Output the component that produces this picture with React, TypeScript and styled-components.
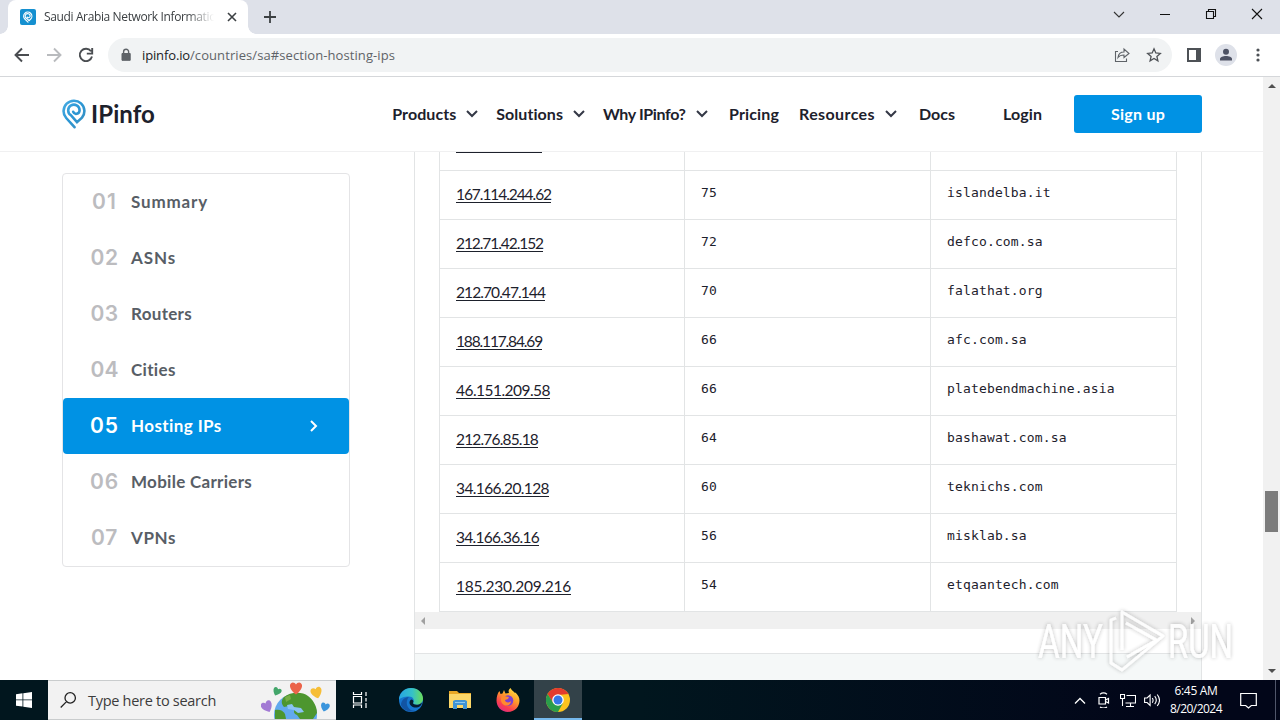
import React, { useLayoutEffect, useRef, useState } from 'react';
import styled, { createGlobalStyle } from 'styled-components';

const GlobalStyle = createGlobalStyle`
	* {
		box-sizing: border-box;
	}

	body {
		margin: 0;
		overflow: hidden;
		background: #fff;
	}
`;

const ui = `'Open Sans', 'Noto Sans', sans-serif`;
const brand = `Lato, 'Open Sans', sans-serif`;
const blue = '#0092e4';

const Desktop = styled.div`
	position: relative;
	display: flex;
	flex-direction: column;
	width: 1280px;
	height: 720px;
	overflow: hidden;
	font-family: ${brand};
	color: #1d212c;
`;

const Tracked = styled.span`
	display: inline-block;
	white-space: nowrap;
`;

interface FitProps {
	width: number;
	children: string;
}

// Spreads the letters evenly so that the label takes the given width
const Fit: React.FC<FitProps> = (props: FitProps) => {
	const ref = useRef<HTMLSpanElement>(null);
	const [spacing, setSpacing] = useState(0);

	useLayoutEffect(() => {
		if (ref.current) {
			const natural = ref.current.getBoundingClientRect().width;
			setSpacing((props.width - natural) / props.children.length);
		}
	}, []);

	return (
		<Tracked ref={ref} style={{ letterSpacing: spacing }}>
			{props.children}
		</Tracked>
	);
};

/* Browser chrome */

const TabStrip = styled.div`
	display: flex;
	justify-content: space-between;
	height: 34px;
	padding-left: 8px;
	background: #dee1e9;
`;

const TabGroup = styled.div`
	display: flex;
	align-items: center;
`;

const Tab = styled.div`
	position: relative;
	display: flex;
	align-items: center;
	width: 240px;
	height: 34px;
	padding: 0 8px 0 12px;
	border-radius: 8px 8px 0 0;
	background: #fff;

	&::before,
	&::after {
		content: '';
		position: absolute;
		bottom: 0;
		width: 8px;
		height: 8px;
	}

	&::before {
		left: -8px;
		background: radial-gradient(circle at 0 0, transparent 7.5px, #fff 8px);
	}

	&::after {
		right: -8px;
		background: radial-gradient(circle at 100% 0, transparent 7.5px, #fff 8px);
	}
`;

const Favicon = styled.div`
	display: flex;
	align-items: center;
	justify-content: center;
	width: 16px;
	height: 16px;
	border-radius: 2px;
	background: #1590d0;
`;

const TabTitle = styled.div`
	flex: 1;
	margin: 0 10px 1px 8px;
	overflow: hidden;
	font: 12px ${ui};
	white-space: nowrap;
	color: #3c4043;
	mask-image: linear-gradient(to right, #000 84%, transparent);
`;

const NewTab = styled.div`
	display: flex;
	margin-left: 15px;
`;

const WindowButtons = styled.div`
	display: flex;
	height: 28px;
`;

const WindowButton = styled.div`
	display: flex;
	align-items: center;
	justify-content: center;
	width: 46px;
`;

const Toolbar = styled.div`
	display: flex;
	align-items: center;
	height: 43px;
	padding: 0 6px;
	border-bottom: 1px solid #d5d7da;
	background: #fff;
`;

const ToolButton = styled.div`
	display: flex;
	align-items: center;
	justify-content: center;
	width: 32px;
	height: 32px;
`;

const Omnibox = styled.div`
	display: flex;
	align-items: center;
	flex: 1;
	height: 34px;
	margin: 0 6px;
	padding: 0 2px 0 12px;
	border-radius: 17px;
	background: #f1f3f4;
`;

const Url = styled.div`
	flex: 1;
	margin-left: 10px;
	font: 13px ${ui};
	color: #5f6368;

	b {
		font-weight: 400;
		color: #202124;
	}
`;

const Avatar = styled.div`
	display: flex;
	align-items: center;
	justify-content: center;
	width: 22px;
	height: 22px;
	border-radius: 50%;
	background: #dee1e9;
`;

/* Web page */

const Viewport = styled.div`
	display: flex;
	height: 603px;
`;

const Page = styled.div`
	display: flex;
	flex-direction: column;
	width: 1263px;
`;

const SiteHeader = styled.div`
	display: flex;
	align-items: center;
	justify-content: space-between;
	height: 75px;
	padding: 0 61px 0 62px;
	border-bottom: 1px solid #f0f0f1;
`;

const Logo = styled.div`
	display: flex;
	align-items: center;
	gap: 4px;
	padding-bottom: 1px;
	font-size: 24px;
	font-weight: 700;
	line-height: 28px;
`;

const Nav = styled.div`
	display: flex;
	align-items: center;
	font-size: 16px;
	font-weight: 700;
`;

const NavItem = styled.div<{ $gap: number }>`
	display: flex;
	align-items: center;
	gap: 9px;
	margin-right: ${(p) => p.$gap}px;
	padding-bottom: 2px;
`;

const SignUp = styled.div`
	display: flex;
	align-items: center;
	justify-content: center;
	width: 128px;
	height: 38px;
	padding-bottom: 2px;
	border-radius: 3px;
	background: ${blue};
	color: #fff;
`;

const Main = styled.div`
	display: flex;
	align-items: flex-start;
	justify-content: space-between;
	height: 528px;
	padding: 0 61px 0 62px;
`;

const Sections = styled.div`
	width: 288px;
	margin-top: 21px;
	border: 1px solid #e4e4e6;
	border-radius: 4px;
`;

const Section = styled.div<{ $active: boolean }>`
	display: flex;
	align-items: center;
	height: 56px;
	padding: 0 29px 2px 27px;
	border-radius: 4px;
	background: ${(p) => (p.$active ? blue : 'transparent')};
	color: ${(p) => (p.$active ? '#fff' : '#585e66')};
	font-size: 17px;
	font-weight: 700;

	svg {
		margin-top: 2px;
	}
`;

const SectionNumber = styled.div<{ $active: boolean }>`
	width: 29px;
	margin-right: 12px;
	text-align: center;
	font-family: Inter, sans-serif;
	font-size: 21px;
	font-weight: 600;
	color: ${(p) => (p.$active ? '#fff' : '#bcbcbf')};
`;

const SectionLabel = styled.div`
	flex: 1;
`;

const Card = styled.div`
	display: flex;
	flex-direction: column;
	width: 788px;
	height: 528px;
	border: solid #e2e4e5;
	border-width: 0 1px;
`;

const Table = styled.div`
	width: 738px;
	margin-left: 24px;
	border: solid #e2e4e5;
	border-width: 0 1px;
`;

const Row = styled.div<{ $height: number }>`
	display: grid;
	grid-template-columns: 244px 246px 246px;
	height: ${(p) => p.$height}px;
	border-bottom: 1px solid #e2e4e5;
`;

const Cell = styled.div`
	padding: 13px 16px 0;
	border-left: 1px solid #e2e4e5;
	font: 13px/18px 'DejaVu Sans Mono', monospace;
	letter-spacing: 0.155px;

	&:first-child {
		border-left: 0;
	}
`;

const IpCell = styled.div`
	padding: 11px 16px 0;
	font-size: 15.5px;
	font-weight: 400;
	line-height: 24px;

	span {
		height: 21px;
		border-bottom: 1px solid #1d212c;
		line-height: 24px;
	}
`;

const CutLink = styled.div`
	width: 86px;
	height: 1px;
	margin-left: 16px;
	background: #1d212c;
`;

const SideScroll = styled.div`
	display: flex;
	align-items: center;
	justify-content: space-between;
	height: 17px;
	padding: 0 6px;
	background: #f0f0f0;
`;

const NextPanel = styled.div`
	flex: 1;
	margin-top: 24px;
	border-top: 1px solid #e2e4e5;
	background: #f5f8f8;
`;

const Scrollbar = styled.div`
	display: flex;
	flex-direction: column;
	align-items: center;
	width: 17px;
	padding: 7px 0;
	background: #f1f1f1;
`;

const Thumb = styled.div`
	width: 13px;
	height: 41px;
	margin: 403px 0 auto;
	background: #7c7c7c;
`;

const Arrow = styled.div<{ $dir: 'up' | 'down' | 'left' | 'right' }>`
	border: 4px solid transparent;
	${(p) => p.$dir === 'up' && 'border-top: 0; border-bottom-color: #505050;'}
	${(p) => p.$dir === 'down' && 'border-bottom: 0; border-top-color: #505050;'}
	${(p) => p.$dir === 'left' && 'border-left: 0; border-right-color: #a0a0a0;'}
	${(p) => p.$dir === 'right' && 'border-right: 0; border-left-color: #a0a0a0;'}
`;

/* Taskbar */

const Taskbar = styled.div`
	display: flex;
	height: 40px;
	background: linear-gradient(to right, #01161e, #01161e 50%, #020619 90%);
	color: #fff;
	font-family: ${ui};
`;

const TaskButton = styled.div<{ $width: number; $active?: boolean }>`
	display: flex;
	align-items: center;
	justify-content: center;
	width: ${(p) => p.$width}px;
	background: ${(p) => (p.$active ? '#334249' : 'transparent')};
	box-shadow: ${(p) => (p.$active ? 'inset 0 -2px #76b9ed' : 'none')};
`;

const SearchBox = styled.div`
	display: flex;
	align-items: center;
	justify-content: space-between;
	width: 288px;
	padding: 0 3px 0 12px;
	border: solid #c9cccd;
	border-width: 1px 0;
	background: #f2f2f2;
	color: #3c3c3c;
	font-size: 14.5px;
`;

const SearchHint = styled.div`
	display: flex;
	align-items: center;
	gap: 11px;
`;

const Tray = styled.div`
	display: flex;
	align-items: center;
	margin-left: auto;
`;

const TrayIcon = styled.div`
	display: flex;
	align-items: center;
	justify-content: center;
	width: 24px;
`;

const Clock = styled.div`
	display: flex;
	flex-direction: column;
	align-items: center;
	width: 64px;
	font-size: 12px;
	line-height: 18px;
`;

const ShowDesktop = styled.div`
	width: 5px;
	height: 40px;
	margin-left: 6px;
	border-left: 1px solid #50566a;
`;

const Watermark = styled.svg`
	position: absolute;
	left: 1030px;
	top: 600px;
	overflow: visible;
`;

const Stroke: React.FC<{ d: string; size?: number; color?: string; width?: number }> = ({
	d,
	size = 16,
	color = '#5f6368',
	width = 2,
}) => (
	<svg width={size} height={size} viewBox={`0 0 ${size} ${size}`} fill="none" stroke={color} strokeWidth={width}>
		<path d={d} />
	</svg>
);

const Pin: React.FC<{ size: number; color: string }> = ({ size, color }) => (
	<svg width={size * 0.8} height={size} viewBox="0 0 24 30" fill="none" stroke={color} strokeWidth="2.9" strokeLinecap="round">
		<path d="M12.5 28 4.7 20.3A10.3 10.3 0 1 1 19.3 20.1L15.1 24.2 9.2 18.4A6.1 6.1 0 1 1 17.4 14.6C15.9 17.4 11.8 17.5 10.6 15" />
	</svg>
);

const Heart: React.FC<{ x: number; y: number; color: string; turn: number; size?: number }> = (p) => (
	<path
		transform={`translate(${p.x} ${p.y}) rotate(${p.turn}) scale(${p.size ?? 1})`}
		d="M0 5C-3 3-5-.2-4.6-2.3-4-5-1-4.8 0-2.7 1-4.8 4-5 4.6-2.3 5-.2 3 3 0 5z"
		fill={p.color}
	/>
);

const Earth = () => (
	<svg width="72" height="38" viewBox="0 0 72 38">
		<circle cx="34.5" cy="34" r="21.5" fill="#62a9ee" />
		<path d="M23 16c6-5 18-6 24-1 4 3 9 9 9 17l-4 6H39l-3-4c-3-1-4-4-2-6l-6-3-5 1c-3-3-3-7 0-10z" fill="#4d962f" />
		<path d="M14 29c4-1 8 0 10 4l1 5H14z" fill="#4d962f" />
		<path d="M26 24l5-1 2 3 7 1 3 4-6 1-4-3-6-1z" fill="#8ac3f3" />
		<path d="M24 16l5-2 1 4-5 3z" fill="#76ad45" />
		<Heart x={35} y={7} color="#eb6349" turn={0} size={1.3} />
		<Heart x={16} y={10.5} color="#43a66a" turn={25} size={0.9} />
		<Heart x={55.5} y={11.5} color="#f6be36" turn={-15} size={1.2} />
		<Heart x={6} y={25.5} color="#a27ad4" turn={-25} size={1.2} />
		<Heart x={64} y={26} color="#3b95dc" turn={15} size={0.95} />
	</svg>
);

const Edge = () => (
	<svg width="24" height="24" viewBox="0 0 24 24">
		<defs>
			<linearGradient id="edgeTop" x1="0" x2="1">
				<stop offset="0" stopColor="#27a6e2" />
				<stop offset=".55" stopColor="#35c1c9" />
				<stop offset="1" stopColor="#6bdd58" />
			</linearGradient>
		</defs>
		<circle cx="12" cy="12" r="12" fill="#1676cf" />
		<path d="M0 12C0 4.500 6 0 12 0c7 0 12 5 12 10.500 0 4-3 6.300-6.500 6.300-2.600 0-4-1-3.300-2.200 1.800-3-.7-6-4.200-6C5 8.600 1 10 0 12z" fill="url(#edgeTop)" />
		<path d="M8 13c-1.500 6 4 11 9 9.500C12 25 4 23 2 17c0-4 3-8 8-8-1.300 1-1.700 2.500-2 4z" fill="#1254a3" />
		<path d="M14.200 14.600c-.7 1.200.700 2.200 3.300 2.200 2 0 4-.8 5.500-2.300-.5 3-2.500 4.700-5 5-4 .5-7.500-2-7.500-5 0-1.500 1-3 2.200-3 1.500.3 2.200 1.700 1.500 3.100z" fill="#051c30" />
	</svg>
);

const Folder = () => (
	<svg width="22" height="20" viewBox="0 0 22 20">
		<path d="M0 1h8l2 2h12v15H0z" fill="#e9a825" />
		<path d="M0 4h22v14H0z" fill="#fcd768" />
		<path d="M4 19v-8l2-1h10l2 1v8h-4v-4H8v4z" fill="#3f94d6" />
		<path d="M6 12h10v1H6z" fill="#8cc9f2" />
	</svg>
);

const Firefox = () => (
	<svg width="24" height="24" viewBox="0 0 24 24">
		<defs>
			<linearGradient id="fox" x1=".8" y1="0" x2=".2" y2="1">
				<stop offset="0" stopColor="#ffe243" />
				<stop offset=".4" stopColor="#ff9a2a" />
				<stop offset=".75" stopColor="#fb3d50" />
				<stop offset="1" stopColor="#d92a8c" />
			</linearGradient>
		</defs>
		<path d="M3.500 3l1 3 2-.5L8 2l1.500 3.500L13 5c-1-2 0-4 1.500-5 1 2.500 3 3 4.500 5l.5-.5C22 7 23.500 9.500 23.500 12.500 23.500 19 18.500 24 12 24S.5 19 .5 12.500C.5 9 1.500 5 3.500 3z" fill="url(#fox)" />
		<circle cx="12" cy="12.500" r="5.300" fill="#7d3fd0" />
		<path d="M6 8c3-1 4 1 7 1l-1 2-3 1c0 3 5 3 6 1 0 4-4 5.500-7 4-3-1.500-4-6-2-9z" fill="#ff8a2e" />
	</svg>
);

const Chrome = () => (
	<svg width="24" height="24" viewBox="0 0 24 24">
		<circle cx="12" cy="12" r="12" fill="#fcc31e" />
		<path d="M1.600 6A12 12 0 0 1 22.400 6L12 7 7 15z" fill="#e33b2e" />
		<path d="M1.600 6A12 12 0 0 0 12 24l5-9-5 2-4.700-2z" fill="#2a9d4b" />
		<circle cx="12" cy="12" r="5.800" fill="#fff" />
		<circle cx="12" cy="12" r="4.500" fill="#3577e8" />
	</svg>
);

const navItems = [
	{ label: 'Products', width: 64, menu: true, gap: 17 },
	{ label: 'Solutions', width: 67, menu: true, gap: 17 },
	{ label: 'Why IPinfo?', width: 82.5, menu: true, gap: 20.5 },
	{ label: 'Pricing', width: 50, menu: false, gap: 20 },
	{ label: 'Resources', width: 76, menu: true, gap: 21 },
	{ label: 'Docs', width: 36, menu: false, gap: 48 },
	{ label: 'Login', width: 39, menu: false, gap: 32 },
];

const sections = [
	{ label: 'Summary', width: 77, numberWidth: 25 },
	{ label: 'ASNs', width: 45, numberWidth: 28 },
	{ label: 'Routers', width: 61, numberWidth: 28 },
	{ label: 'Cities', width: 45, numberWidth: 28 },
	{ label: 'Hosting IPs', width: 91, numberWidth: 29 },
	{ label: 'Mobile Carriers', width: 121, numberWidth: 29 },
	{ label: 'VPNs', width: 45, numberWidth: 27 },
];

const rows = [
	{ ip: '167.114.244.62', width: 95, domains: 75, name: 'islandelba.it' },
	{ ip: '212.71.42.152', width: 87, domains: 72, name: 'defco.com.sa' },
	{ ip: '212.70.47.144', width: 89, domains: 70, name: 'falathat.org' },
	{ ip: '188.117.84.69', width: 86, domains: 66, name: 'afc.com.sa' },
	{ ip: '46.151.209.58', width: 94, domains: 66, name: 'platebendmachine.asia' },
	{ ip: '212.76.85.18', width: 82, domains: 64, name: 'bashawat.com.sa' },
	{ ip: '34.166.20.128', width: 93, domains: 60, name: 'teknichs.com' },
	{ ip: '34.166.36.16', width: 83, domains: 56, name: 'misklab.sa' },
	{ ip: '185.230.209.216', width: 115, domains: 54, name: 'etqaantech.com' },
];

const BrowserChrome = () => (
	<>
		<TabStrip>
			<TabGroup>
				<Tab>
					<Favicon>
						<Pin size={12} color="#fff" />
					</Favicon>
					<TabTitle>
						<Fit width={179}>Saudi Arabia Network Information</Fit>
					</TabTitle>
					<Stroke d="M4 4l8 8M12 4l-8 8" color="#3c4043" width={1.6} />
				</Tab>
				<NewTab>
					<Stroke d="M7 1v12M1 7h12" size={14} color="#3c4043" width={1.8} />
				</NewTab>
			</TabGroup>
			<WindowButtons>
				<WindowButton>
					<Stroke d="M3 6l5 5 5-5" color="#333" width={1.1} />
				</WindowButton>
				<WindowButton>
					<Stroke d="M3 8.500h10" color="#111" width={1} />
				</WindowButton>
				<WindowButton>
					<Stroke d="M3.500 5.500h7v7h-7zM5.500 5.500v-2h7v7h-2" color="#111" width={1.1} />
				</WindowButton>
				<WindowButton>
					<Stroke d="M3 3l10 10M13 3L3 13" color="#111" width={1.1} />
				</WindowButton>
			</WindowButtons>
		</TabStrip>
		<Toolbar>
			<ToolButton>
				<Stroke d="M15 8H2M8 1.500L1.500 8 8 14.500" color="#4a4d51" width={1.9} />
			</ToolButton>
			<ToolButton>
				<Stroke d="M1 8h13M8 1.500L14.500 8 8 14.500" color="#b9bbbe" width={1.9} />
			</ToolButton>
			<ToolButton>
				<Stroke d="M13 4.200A6.200 6.200 0 1 0 14 9.500M14.200 1v5.600H8.800" color="#4a4d51" width={1.9} />
			</ToolButton>
			<Omnibox>
				<svg width="12" height="14" viewBox="0 0 12 14">
					<path d="M2 5.500h8.200v6.800H2z" fill="#5f6368" stroke="#5f6368" strokeLinejoin="round" />
					<path d="M3.600 6V3.800a2.500 2.500 0 0 1 5 0V6" fill="none" stroke="#5f6368" strokeWidth="1.400" />
				</svg>
				<Url>
					<b>
						<Fit width={48}>ipinfo.io</Fit>
					</b>
					<Fit width={205}>/countries/sa#section-hosting-ips</Fit>
				</Url>
				<ToolButton>
					<Stroke
						d="M4 4.500H1.500v10h11v-3M4 10.500c.5-4 3-5.500 6-5.500V2l5 4.500-5 4V8c-3 0-4.500.5-6 2.500z"
						width={1.1}
					/>
				</ToolButton>
				<ToolButton>
					<Stroke
						d="M8 1.800l1.800 4.200 4.500.4-3.400 3 1 4.400L8 11.500l-3.900 2.300 1-4.400-3.400-3 4.500-.4z"
						color="#4f5257"
						width={1.3}
					/>
				</ToolButton>
			</Omnibox>
			<ToolButton>
				<svg width="14" height="14" viewBox="0 0 14 14">
					<path d="M1 1h12v12H1z" fill="#fff" stroke="#4d5156" strokeWidth="2" />
					<path d="M9 1h4v12H9z" fill="#4d5156" />
				</svg>
			</ToolButton>
			<ToolButton>
				<Avatar>
					<svg width="14" height="14" viewBox="0 0 14 14" fill="#4c5163">
						<circle cx="7" cy="3.800" r="3" />
						<path d="M1 12.500v-1.500c0-2 3-3 6-3s6 1 6 3v1.500z" />
					</svg>
				</Avatar>
			</ToolButton>
			<ToolButton>
				<svg width="4" height="14" viewBox="0 0 4 14" fill="#4d5156">
					<circle cx="2" cy="2" r="1.600" />
					<circle cx="2" cy="7" r="1.600" />
					<circle cx="2" cy="12" r="1.600" />
				</svg>
			</ToolButton>
		</Toolbar>
	</>
);

const Site = () => (
	<Page>
		<SiteHeader>
			<Logo>
				<svg width="25" height="31" viewBox="0 0 25 31">
					<defs>
						<linearGradient id="pin" x1="0" x2="1" y1="0" y2="1">
							<stop offset="0" stopColor="#46abe2" />
							<stop offset=".5" stopColor="#2b96d4" />
							<stop offset="1" stopColor="#3d8fbd" />
						</linearGradient>
					</defs>
					<path
						d="M12.500 29.200L4.200 20A10.400 10.400 0 1 1 20 19.700L15 24.200 8.900 17.200A5.700 5.700 0 1 1 17.600 12.200C17.400 16.200 12.500 17.200 11.200 13.800"
						fill="none"
						stroke="url(#pin)"
						strokeWidth="2.600"
						strokeLinecap="round"
					/>
				</svg>
				<Fit width={64}>IPinfo</Fit>
			</Logo>
			<Nav>
				{navItems.map((item) => (
					<NavItem key={item.label} $gap={item.gap}>
						<Fit width={item.width}>{item.label}</Fit>
						{item.menu && <Stroke d="M2 5l5 5 5-5" size={14} color="#343846" />}
					</NavItem>
				))}
				<SignUp>
					<Fit width={54}>Sign up</Fit>
				</SignUp>
			</Nav>
		</SiteHeader>
		<Main>
			<Sections>
				{sections.map((section, i) => (
					<Section key={section.label} $active={i === 4}>
						<SectionNumber $active={i === 4}>
							<Fit width={section.numberWidth}>{`0${i + 1}`}</Fit>
						</SectionNumber>
						<SectionLabel>
							<Fit width={section.width}>{section.label}</Fit>
						</SectionLabel>
						{i === 4 && <Stroke d="M3 1l5 5-5 5" size={12} color="#fff" />}
					</Section>
				))}
			</Sections>
			<Card>
				<Table>
					<Row $height={19}>
						<CutLink />
						<Cell />
						<Cell />
					</Row>
					{rows.map((row) => (
						<Row key={row.ip} $height={49}>
							<IpCell>
								<Fit width={row.width}>{row.ip}</Fit>
							</IpCell>
							<Cell>{row.domains}</Cell>
							<Cell>{row.name}</Cell>
						</Row>
					))}
				</Table>
				<SideScroll>
					<Arrow $dir="left" />
					<Arrow $dir="right" />
				</SideScroll>
				<NextPanel />
			</Card>
		</Main>
	</Page>
);

const WindowsTaskbar = () => (
	<Taskbar>
		<TaskButton $width={48}>
			<svg width="16" height="16" viewBox="0 0 16 16" fill="#fff">
				<path d="M0 2.200l6.500-.9v6.200H0zM7.300 1.200L16 0v7.500H7.300zM0 8.300h6.500v6.300L0 13.700zM7.300 8.300H16V16l-8.700-1.200z" />
			</svg>
		</TaskButton>
		<SearchBox>
			<SearchHint>
				<Stroke d="M10.200.7a5.200 5.200 0 1 1 0 10.400a5.200 5.200 0 1 1 0-10.400zM6.500 9.600L.7 15.500" size={17} color="#222" width={1.3} />
				<Fit width={128}>Type here to search</Fit>
			</SearchHint>
			<Earth />
		</SearchBox>
		<TaskButton $width={48}>
			<Stroke
				d="M2.500 1v2.500h8V1M2.500 17v-3h8v3M2.500 5.500h8v6.500h-8zM15 1v4M15 12v5M15 7v3.500"
				size={18}
				color="#fff"
				width={1.2}
			/>
		</TaskButton>
		<TaskButton $width={54}>
			<Edge />
		</TaskButton>
		<TaskButton $width={44}>
			<Folder />
		</TaskButton>
		<TaskButton $width={52}>
			<Firefox />
		</TaskButton>
		<TaskButton $width={48} $active>
			<Chrome />
		</TaskButton>
		<Tray>
			<TrayIcon>
				<Stroke d="M2 10.500l5-5 5 5" size={14} color="#fff" width={1.3} />
			</TrayIcon>
			<TrayIcon>
				<Stroke
					d="M3 5.500h6.500v6.500H3zM9.500 8l3-1.500v4.500l-3-1.500M4 2.300c2-1.500 5-1.500 7 0M4 15c2 1.300 5 1.300 7 0"
					color="#fff"
					width={1.2}
				/>
			</TrayIcon>
			<TrayIcon>
				<Stroke d="M6.500 3.500h9v7.500H5.500M.5 2.500h4v4h-4zM2.500 6.500v7.500M10.500 11v3M6 14.500h8" color="#fff" width={1.1} />
			</TrayIcon>
			<TrayIcon>
				<Stroke
					d="M.6 6v4.500h2.500l3 3V3l-3 3zM8.300 6c1 1.500 1 3.200 0 4.700M10.700 4.200c2 2.500 2 5.500 0 8M13.200 2.500c2.800 3.500 2.800 8 0 11.500"
					color="#fff"
					width={1.1}
				/>
			</TrayIcon>
			<Clock>
				<Fit width={43}>6:45 AM</Fit>
				<Fit width={52}>8/20/2024</Fit>
			</Clock>
			<TaskButton $width={41}>
				<Stroke d="M.7 1.500h15.600v12h-5L8.500 16l-2.800-2.500h-5z" size={17} color="#fff" width={1.2} />
			</TaskButton>
			<ShowDesktop />
		</Tray>
	</Taskbar>
);

const App: React.FC = () => {
	return (
		<Desktop>
			<GlobalStyle />
			<BrowserChrome />
			<Viewport>
				<Site />
				<Scrollbar>
					<Arrow $dir="up" />
					<Thumb />
					<Arrow $dir="down" />
				</Scrollbar>
			</Viewport>
			<WindowsTaskbar />
			<Watermark width="220" height="80" viewBox="0 0 220 80">
				<defs>
					<filter id="glow" x="-10%" y="-10%" width="120%" height="120%">
						<feDropShadow dx="0" dy="0" stdDeviation="1.900" floodColor="#000" floodOpacity=".32" />
					</filter>
				</defs>
				<g filter="url(#glow)" fill="#fff" opacity=".85" fontFamily="Roboto, sans-serif" fontSize="48" fontWeight="400">
					<text x="8" y="58" textLength="65" lengthAdjust="spacingAndGlyphs">
						ANY
					</text>
					<text x="138" y="58" textLength="65" lengthAdjust="spacingAndGlyphs">
						RUN
					</text>
					<path
						d="M86 18l-5 2v43l11 7 41-34L92 12v38M96 23l32 18M97 57l30-17"
						fill="none"
						stroke="#fff"
						strokeWidth="2.800"
						strokeLinejoin="round"
					/>
				</g>
			</Watermark>
		</Desktop>
	);
};

export default App;
